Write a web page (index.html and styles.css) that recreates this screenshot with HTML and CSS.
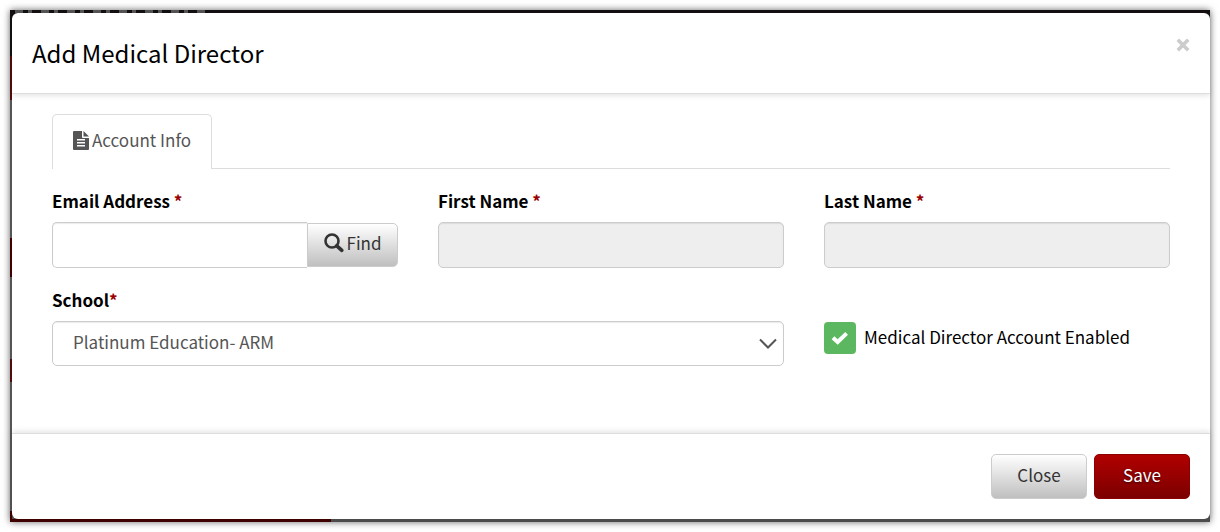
FILE: index.html
```
<!DOCTYPE html>
<html lang="en">
<head>
    <meta charset="UTF-8">
    <meta name="viewport" content="width=device-width, initial-scale=1.0">
    <title>Add Medical Director</title>
    <link rel="stylesheet" href="styles.css">
</head>
<body>
    <div class="backdrop">
        <form class="modal" role="dialog" aria-labelledby="modalTitle">
            <header class="modal-header">
                <h1 id="modalTitle">Add Medical Director</h1>
                <button type="button" class="close" aria-label="Close dialog">
                    <svg width="14" height="14" viewBox="0 0 14 14"><path d="M1.8 1.8 12.2 12.2M12.2 1.8 1.8 12.2" stroke="#ccc" stroke-width="3.6" fill="none"/></svg>
                </button>
            </header>

            <div class="modal-body">
                <nav class="tabs">
                    <a href="#account" class="tab">
                        <svg width="16" height="19" viewBox="0 0 16 19"><path fill="#555" fill-rule="evenodd" d="M1 0H9V6Q9 7 10 7H16V18Q16 19 15 19H1Q0 19 0 18V1Q0 0 1 0ZM4 8V9.5H12V8ZM4 11V12.5H12V11ZM4 14V15.5H12V14Z"/><path fill="#555" d="M10.5 0 16 5.5H10.5Z"/></svg>
                        Account Info
                    </a>
                </nav>

                <div class="fields" id="account">
                    <div class="field">
                        <label for="email">Email Address <span class="required">*</span></label>
                        <div class="input-group">
                            <input type="email" id="email">
                            <button type="button" class="btn btn-find">
                                <svg width="20" height="20" viewBox="0 0 20 20" fill="none" stroke="#333"><circle cx="8" cy="8" r="6.5" stroke-width="2.6"/><path d="M12.8 12.8 17.8 17.3" stroke-width="3.6" stroke-linecap="round"/></svg>
                                Find
                            </button>
                        </div>
                    </div>
                    <div class="field">
                        <label for="firstName">First Name <span class="required">*</span></label>
                        <input type="text" id="firstName" disabled>
                    </div>
                    <div class="field">
                        <label for="lastName">Last Name <span class="required">*</span></label>
                        <input type="text" id="lastName" disabled>
                    </div>
                    <div class="field field-wide">
                        <label for="school">School<span class="required">*</span></label>
                        <div class="select">
                            <select id="school">
                                <option>Platinum Education- ARM</option>
                            </select>
                            <svg width="18" height="12" viewBox="0 0 18 12"><path d="M1 1.5 9 9.5 17 1.5" fill="none" stroke="#555" stroke-width="2"/></svg>
                        </div>
                    </div>
                    <div class="check">
                        <span class="check-box">
                            <input type="checkbox" id="enabled" checked>
                            <svg width="18" height="14" viewBox="0 0 18 14"><path d="M2 6.8 6.7 11 15.6 2.4" fill="none" stroke="#fff" stroke-width="4"/></svg>
                        </span>
                        <label for="enabled">Medical Director Account Enabled</label>
                    </div>
                </div>
            </div>

            <footer class="modal-footer">
                <button type="button" class="btn">Close</button>
                <button type="submit" class="btn btn-save">Save</button>
            </footer>
        </form>
    </div>
</body>
</html>
```
FILE: styles.css
```
:root {
    --border: #ccc;
    --line: #ddd;
    --red: #990000;
    --green: #5cb860;
    --text: #555;
}
* {
    margin: 0;
    padding: 0;
    box-sizing: border-box;
}
body {
    font-family: "Noto Sans CJK SC", "Noto Sans", sans-serif;
    font-size: 17px;
    line-height: 20px;
    color: #000;
    background: #fff;
    padding: 10px;
}
svg {
    display: block;
    flex: none;
}
button, input, select {
    font: inherit;
}

/* strip of the dimmed page around the dialog */
.backdrop {
    display: flex;
    min-height: calc(100vh - 20px);
    padding: 3px 0 3px 2px;
    background:
        repeating-linear-gradient(90deg, #555 0 8px, #130f12 8px 13px, #555 13px 17px, #130f12 17px 26px) 5px 0 / 190px 3px no-repeat,
        linear-gradient(#130f12, #130f12) 0 0 / 100% 10px no-repeat,
        linear-gradient(#400000, #400000) 0 100% / 321px 3px no-repeat,
        linear-gradient(#130f12 0 46px, #500c0c 46px 90px, #555 90px 228px, #400000 228px 267px, #555 267px 349px, #500c0c 349px 372px, #555 372px 501px, #400000 501px) 0 0 / 2px 100% no-repeat,
        #4d4d4d;
    box-shadow: 0 0 7px rgba(0, 0, 0, 0.6);
}
.modal {
    flex: 1;
    display: flex;
    flex-direction: column;
    background: #fff;
    border-radius: 6px;
}
.modal-header {
    display: flex;
    justify-content: space-between;
    padding: 24px 20px;
    border-bottom: 1px solid var(--line);
    box-shadow: 0 2px 5px rgba(0, 0, 0, 0.1);
}
h1 {
    font-size: 24px;
    font-weight: 400;
    line-height: 32px;
}
.close {
    display: grid;
    place-items: center;
    width: 14px;
    height: 16px;
    background: none;
    border: none;
    cursor: pointer;
}
.modal-body {
    flex: 1;
    padding: 20px 40px 40px;
}

.tabs {
    display: flex;
    border-bottom: 1px solid var(--line);
    margin-bottom: 22px;
}
.tab {
    display: flex;
    align-items: center;
    gap: 3px;
    height: 55px;
    padding: 0 20px 4px;
    margin-bottom: -1px;
    color: var(--text);
    text-decoration: none;
    background: #fff;
    border: 1px solid var(--line);
    border-bottom: none;
    border-radius: 5px 5px 0 0;
}

.fields {
    display: grid;
    grid-template-columns: repeat(3, 1fr);
    gap: 22px 40px;
}
.field-wide {
    grid-column: span 2;
}
.field label {
    display: block;
    font-weight: 700;
    margin-bottom: 11px;
}
.required {
    color: var(--red);
}
.field input, select {
    display: block;
    width: 100%;
    height: 46px;
    padding: 0 20px 4px;
    color: var(--text);
    background: #fff;
    border: 1px solid var(--border);
    border-radius: 5px;
    box-shadow: inset 0 1px 1px rgba(0, 0, 0, 0.08);
}
.field input:disabled {
    background: #eee;
}
.input-group {
    display: flex;
    align-items: center;
}
.input-group input {
    flex: 1;
    min-width: 0;
    border-right: none;
    border-radius: 5px 0 0 5px;
}
.select {
    position: relative;
}
select {
    appearance: none;
    height: 45px;
}
.select svg {
    position: absolute;
    right: 7px;
    top: 17px;
    pointer-events: none;
}
.check {
    display: flex;
    gap: 8px;
    align-self: start;
    align-items: center;
    padding-top: 32px;
}
.check label {
    padding-bottom: 3px;
}
.check-box {
    display: grid;
    place-items: center;
    width: 32px;
    height: 32px;
}
.check-box > * {
    grid-area: 1 / 1;
    pointer-events: none;
}
.check-box input {
    appearance: none;
    width: 32px;
    height: 32px;
    background: var(--green);
    border-radius: 4px;
    pointer-events: auto;
}

.btn {
    display: flex;
    align-items: center;
    justify-content: center;
    min-width: 96px;
    height: 45px;
    padding-bottom: 4px;
    color: #333;
    background: linear-gradient(#fff, #bfbfbf);
    border: 1px solid var(--border);
    border-radius: 5px;
    cursor: pointer;
}
.btn-find {
    gap: 3px;
    min-width: 91px;
    height: 44px;
    border-radius: 0 5px 5px 0;
}
.btn-save {
    color: #fff;
    background: linear-gradient(#b00000, #7c0000);
    border-color: #8c0000;
    text-shadow: 0 1px 2px rgba(0, 0, 0, 0.6);
}
.modal-footer {
    display: flex;
    justify-content: flex-end;
    gap: 7px;
    padding: 20px;
    border-top: 1px solid var(--line);
    box-shadow: 0 -2px 5px rgba(0, 0, 0, 0.1);
}
```
